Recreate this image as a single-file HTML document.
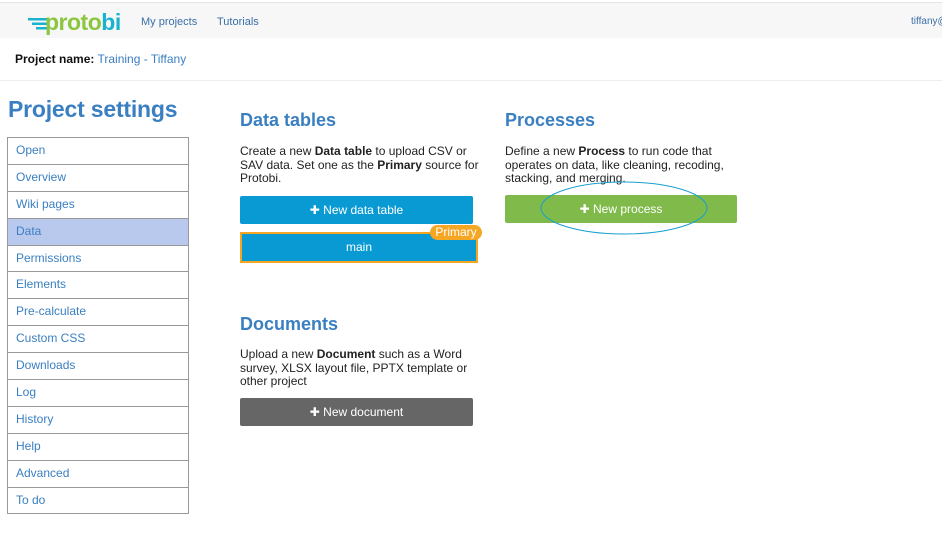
<!DOCTYPE html>
<html><head><meta charset="utf-8"><style>
*{box-sizing:border-box;margin:0;padding:0}
body{width:942px;height:540px;overflow:hidden;background:#fff;font-family:"Liberation Sans",Arial,sans-serif;position:relative;color:#222}
.top{position:absolute;left:0;top:2px;width:942px;height:36px;background:#f7f7f7;border-top:1px solid #e4e4e4}
.logo{position:absolute;left:28px;top:7px;font-size:23px;font-weight:bold;letter-spacing:-0.5px;line-height:24px}
.nav{position:absolute;top:13px;font-size:11px;color:#3a6fa8}
.pn{position:absolute;left:15px;top:52px;font-size:12px}
.pn b{color:#111}.pn span{color:#3a7fc1}
.hr{position:absolute;left:0;top:80px;width:942px;border-top:1px solid #eee}
h1{position:absolute;left:8px;top:96px;font-size:23px;color:#3a7fc1;font-weight:bold;letter-spacing:-0.2px}
.side{position:absolute;left:7px;top:137px;width:182px;border:1px solid #999;border-bottom:none}
.side div{height:26.9px;border-bottom:1px solid #999;font-size:12px;color:#3a7fc1;padding-left:8px;line-height:25px}
.side .act{background:#b9c9ee}
h2{position:absolute;font-size:18px;color:#3a7fc1;font-weight:bold}
.p{position:absolute;font-size:12px;line-height:13.5px;color:#222}
.btn{position:absolute;height:28px;color:#fff;font-size:12px;text-align:center;line-height:28px;border-radius:2px}
</style></head><body>
<div class="top">
 <div class="logo"><svg width="20" height="12" style="vertical-align:0px;margin-right:-3px" viewBox="0 0 20 12"><rect x="0" y="0" width="20" height="2.5" fill="#19b3cf"/><rect x="4" y="4.5" width="16" height="2.5" fill="#19b3cf"/><rect x="8" y="9" width="12" height="2.5" fill="#19b3cf"/></svg><span style="color:#8cc63f">proto</span><span style="color:#19b3cf">bi</span></div>
 <div class="nav" style="left:141px">My projects</div>
 <div class="nav" style="left:217px">Tutorials</div>
 <div class="nav" style="left:911px;font-size:10px">tiffany@</div>
</div>
<div class="pn"><b>Project name:</b> <span>Training - Tiffany</span></div>
<div class="hr"></div>
<h1>Project settings</h1>
<div class="side">
<div>Open</div><div>Overview</div><div>Wiki pages</div><div class="act">Data</div><div>Permissions</div><div>Elements</div><div>Pre-calculate</div><div>Custom CSS</div><div>Downloads</div><div>Log</div><div>History</div><div>Help</div><div>Advanced</div><div>To do</div>
</div>
<h2 style="left:240px;top:110px">Data tables</h2>
<div class="p" style="left:240px;top:145px;width:240px">Create a new <b>Data table</b> to upload CSV or SAV data. Set one as the <b>Primary</b> source for Protobi.</div>
<div class="btn" style="left:240px;top:196px;width:233px;background:#0a9ad3">✚ New data table</div>
<div class="btn" style="left:240px;top:232px;width:238px;height:31px;background:#0a9ad3;border:2px solid #f5a623;line-height:26px;border-radius:0">main</div>
<div style="position:absolute;left:430px;top:225px;width:52px;height:15px;background:#f5a623;color:#fff;font-size:12px;line-height:15px;text-align:center;border-radius:8px">Primary</div>
<h2 style="left:240px;top:314px">Documents</h2>
<div class="p" style="left:240px;top:348px;width:230px">Upload a new <b>Document</b> such as a Word survey, XLSX layout file, PPTX template or other project</div>
<div class="btn" style="left:240px;top:398px;width:233px;background:#666">✚ New document</div>
<h2 style="left:505px;top:110px">Processes</h2>
<div class="p" style="left:505px;top:145px;width:240px">Define a new <b>Process</b> to run code that operates on data, like cleaning, recoding, stacking, and merging.</div>
<div class="btn" style="left:505px;top:195px;width:232px;background:#7fba4a">✚ New process</div>
<svg style="position:absolute;left:540px;top:181px" width="170" height="56"><ellipse cx="84" cy="27" rx="83" ry="26" fill="none" stroke="#1a9fd0" stroke-width="1"/></svg>
</body></html>
